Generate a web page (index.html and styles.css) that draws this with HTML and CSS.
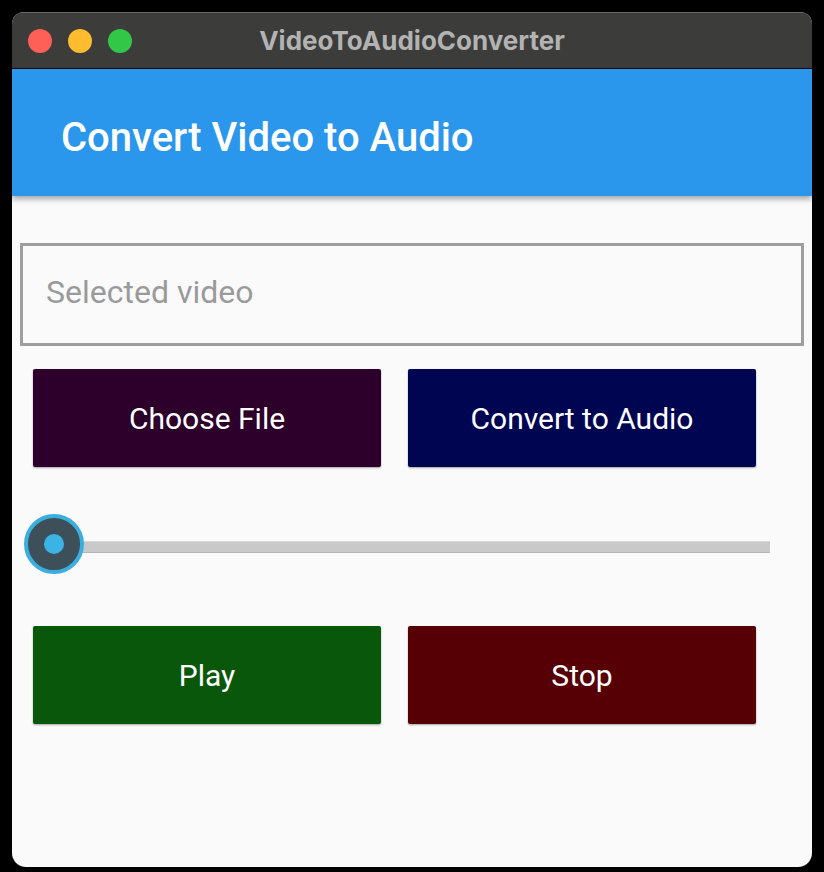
FILE: index.html
```html
<!DOCTYPE html>
<html>
<head>
<meta charset="utf-8">
<link rel="stylesheet" href="styles.css">
</head>
<body>
<div class="window">
  <div class="titlebar">
    <div class="lights">
      <span class="light red"></span>
      <span class="light yellow"></span>
      <span class="light green"></span>
    </div>
    <div class="wtitle">VideoToAudioConverter</div>
  </div>
  <div class="appbar">
    <h1 class="apptitle">Convert Video to Audio</h1>
  </div>
  <div class="content">
    <div class="field"><span class="placeholder">Selected video</span></div>
    <div class="row row-top">
      <button class="btn btn-choose">Choose File</button>
      <button class="btn btn-convert">Convert to Audio</button>
    </div>
    <div class="slider">
      <div class="track"></div>
      <div class="thumb"><span class="dot"></span></div>
    </div>
    <div class="row row-bottom">
      <button class="btn btn-play">Play</button>
      <button class="btn btn-stop">Stop</button>
    </div>
  </div>
</div>
</body>
</html>
```

FILE: styles.css
```css
html, body {
  margin: 0;
  padding: 0;
  background: #000;
  width: 824px;
  height: 872px;
  overflow: hidden;
}
body {
  padding: 12px 0 0 12px;
  box-sizing: border-box;
  font-family: Roboto, "Liberation Sans", sans-serif;
}
.window {
  width: 800px;
  height: 855px;
  border-radius: 12px 12px 14px 14px;
  overflow: hidden;
  background: #fafafa;
  display: flex;
  flex-direction: column;
}
.titlebar {
  background: #3c3c3a;
  border-bottom: 1px solid #0c0c0c;
  border-top: 1px solid #6b6b6b;
  box-sizing: border-box;
  height: 57px;
  display: flex;
  align-items: center;
  position: relative;
  flex: none;
}
.lights {
  display: flex;
  gap: 16px;
  padding-left: 16px;
}
.light {
  width: 24px;
  height: 24px;
  border-radius: 50%;
  display: block;
}
.red { background: #fe5f57; }
.yellow { background: #febc2e; }
.green { background: #33c748; }
.wtitle {
  position: absolute;
  left: 0;
  right: 0;
  top: 50%;
  transform: translateY(-52%);
  text-align: center;
  font-family: Inter, "Noto Sans", sans-serif;
  font-weight: 700;
  font-size: 26px;
  color: #b3b3b3;
}
.appbar {
  height: 127px;
  background: #2a96ec;
  display: flex;
  align-items: center;
  padding-left: 49px;
  padding-top: 10px;
  box-sizing: border-box;
  box-shadow: 0 3px 6px rgba(0,0,0,0.35);
  position: relative;
  z-index: 1;
  flex: none;
}
.apptitle {
  margin: 0;
  font-family: Roboto, sans-serif;
  font-weight: 500;
  font-size: 40px;
  color: #fff;
}
.content {
  padding: 47px 8px 0 8px;
  display: flex;
  flex-direction: column;
}
.field {
  height: 103px;
  box-sizing: border-box;
  border: 3px solid #9e9e9e;
  display: flex;
  align-items: center;
  padding-left: 23px;
  padding-bottom: 6px;
}
.placeholder {
  font-size: 32px;
  color: #9a9a9a;
}
.row {
  display: flex;
  gap: 27px;
  padding-left: 13px;
}
.row-top { margin-top: 23px; }
.row-bottom { margin-top: 52px; }
.btn {
  width: 348px;
  height: 98px;
  border: none;
  border-radius: 2px;
  color: #fff;
  font-family: Roboto, sans-serif;
  font-size: 30px;
  box-shadow: 0 1px 2px rgba(0,0,0,0.35);
}
.btn-choose { background: #2c002b; }
.btn-convert { background: #000552; }
.btn-play { background: #08570a; }
.btn-stop { background: #560005; }
.slider {
  margin-top: 47px;
  height: 60px;
  position: relative;
  display: flex;
  align-items: center;
  padding-left: 4px;
}
.track {
  margin-left: 40px;
  margin-top: 6px;
  width: 706px;
  height: 12px;
  background: #c9c9c9;
  border-top: 1px solid #d8d8d8;
  border-bottom: 1px solid #b5b5b5;
  box-sizing: border-box;
}
.thumb {
  position: absolute;
  left: 4px;
  top: 0;
  width: 60px;
  height: 60px;
  box-sizing: border-box;
  border-radius: 50%;
  border: 4px solid #3aafdf;
  background: #3d4f58;
  display: flex;
  align-items: center;
  justify-content: center;
}
.dot {
  width: 20px;
  height: 20px;
  border-radius: 50%;
  background: #3bb3e6;
  display: block;
}
```
